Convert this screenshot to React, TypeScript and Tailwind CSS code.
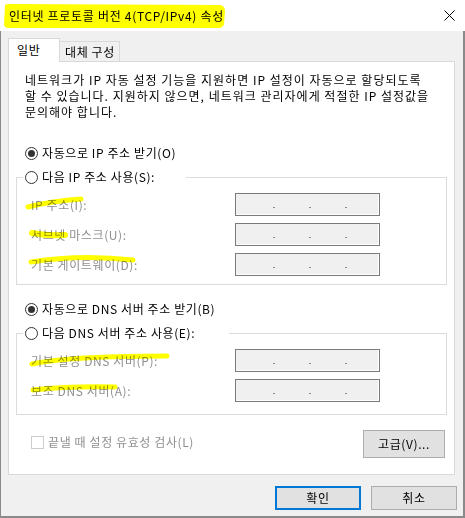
import React from "react";

function Radio({ checked, label }: { checked?: boolean; label: string }) {
  return (
    <div className="flex items-center h-[16px] leading-[16px] whitespace-nowrap">
      <span className="w-[13px] h-[13px] rounded-full border border-[#333333] bg-white flex items-center justify-center shrink-0">
        {checked && <span className="w-[7px] h-[7px] rounded-full bg-[#333333]" />}
      </span>
      <span className="ml-[4px] tracking-[0.6px]">{label}</span>
    </div>
  );
}

function IpField() {
  return (
    <div className="w-[145px] h-[23px] border border-[#7a7a7a] bg-[#f0f0f0] shadow-[inset_-1px_-1px_0_#ffffff] flex pl-[37px] gap-[34px] pt-[13px] shrink-0">
      <span className="w-[2px] h-[1px] bg-[#8a8a9a]" />
      <span className="w-[2px] h-[1px] bg-[#8a8a9a]" />
      <span className="w-[2px] h-[1px] bg-[#8a8a9a]" />
    </div>
  );
}

function FieldRow({ label }: { label: string }) {
  return (
    <div className="flex items-center justify-between pr-[66px]">
      <span className="text-[#8f8f8f] whitespace-nowrap leading-[16px] tracking-[0.6px]">{label}</span>
      <IpField />
    </div>
  );
}

function Group({ legend, legendWidth, children, pb }: { legend: string; legendWidth: string; children: React.ReactNode; pb: string }) {
  return (
    <fieldset className={`border border-[#dcdcdc] ml-[7px] w-[431px] ${pb}`}>
      <legend className={`ml-[6px] pl-[2px] ${legendWidth}`}>
        <Radio label={legend} />
      </legend>
      <div className="flex flex-col gap-[7px] pt-[8px] pl-[14px]">{children}</div>
    </fieldset>
  );
}

function Button({ label, primary, h = "h-[24px]", w = "w-[86px]" }: { label: string; primary?: boolean; h?: string; w?: string }) {
  return (
    <div
      className={`${w} ${h} bg-[#e1e1e1] flex items-center justify-center leading-[16px] tracking-[0.6px] ${
        primary ? "border-2 border-[#0078d7]" : "border border-[#adadad]"
      }`}
    >
      {label}
    </div>
  );
}

export default function App() {
  return (
    <div className="relative w-[465px] h-[518px] flex flex-col bg-[#f0f0f0] text-[12px] text-black font-['Noto_Sans_CJK_KR','Noto_Sans',sans-serif] overflow-hidden">
      {/* title bar */}
      <div className="h-[31px] bg-white flex items-center justify-between pl-[9px] pr-[10px] shrink-0">
        <span className="leading-[16px] whitespace-nowrap tracking-[0.7px]">인터넷 프로토콜 버전 4(TCP/IPv4) 속성</span>
        <svg width="11" height="11" viewBox="0 0 11 11">
          <path d="M0.5 0.5 L10.5 10.5 M10.5 0.5 L0.5 10.5" stroke="#000" strokeWidth="1" />
        </svg>
      </div>

      <div className="flex-1 flex flex-col border-l border-r-2 border-b-2 border-[#8a8a8a] pl-[7px] pt-[7px]">
        {/* tabs */}
        <div className="flex items-end h-[23px]">
          <div className="w-[52px] h-[24px] -mb-px relative z-10 bg-white border border-b-0 border-[#d9d9d9] pl-[8px] pt-[3px] leading-[16px] tracking-[0.6px]">
            일반
          </div>
          <div className="w-[60px] h-[20px] border-t border-r border-[#d9d9d9] pl-[5px] pt-[2px] leading-[16px] whitespace-nowrap tracking-[0.6px]">
            대체 구성
          </div>
        </div>

        {/* panel */}
        <div className="w-[447px] h-[414px] bg-white border border-[#d9d9d9] flex flex-col">
          <p className="pl-[16px] pt-[10px] leading-[16px] whitespace-nowrap tracking-[1px]">
            네트워크가 IP 자동 설정 기능을 지원하면 IP 설정이 자동으로 할당되도록
            <br />
            할 수 있습니다. 지원하지 않으면, 네트워크 관리자에게 적절한 IP 설정값을
            <br />
            문의해야 합니다.
          </p>

          <div className="pl-[16px] mt-[25px]">
            <Radio checked label="자동으로 IP 주소 받기(O)" />
          </div>

          <div className="mt-[8px]">
            <Group legend="다음 IP 주소 사용(S):" legendWidth="w-[163px]" pb="pb-[8px]">
              <FieldRow label="IP 주소(I):" />
              <FieldRow label="서브넷 마스크(U):" />
              <FieldRow label="기본 게이트웨이(D):" />
            </Group>
          </div>

          <div className="pl-[16px] mt-[16px]">
            <Radio checked label="자동으로 DNS 서버 주소 받기(B)" />
          </div>

          <div className="mt-[8px]">
            <Group legend="다음 DNS 서버 주소 사용(E):" legendWidth="w-[206px]" pb="pb-[12px]">
              <FieldRow label="기본 설정 DNS 서버(P):" />
              <FieldRow label="보조 DNS 서버(A):" />
            </Group>
          </div>

          <div className="flex items-start justify-between mt-[15px] pl-[22px] pr-[9px]">
            <div className="flex items-center mt-[4px] leading-[16px]">
              <span className="w-[13px] h-[13px] border border-[#cccccc] bg-white" />
              <span className="ml-[4px] text-[#8f8f8f] whitespace-nowrap tracking-[0.6px]">끝낼 때 설정 유효성 검사(L)</span>
            </div>
            <Button label="고급(V)..." w="w-[82px]" h="h-[28px]" />
          </div>
        </div>

        {/* bottom buttons */}
        <div className="flex justify-end gap-[10px] pr-[6px] mt-[11px]">
          <Button label="확인" primary />
          <Button label="취소" />
        </div>
      </div>

      {/* highlighter marks */}
      <svg className="absolute inset-0 pointer-events-none mix-blend-multiply" width="465" height="518" viewBox="0 0 465 518">
        <path d="M5 7 Q4 4 9 4 L220 5 Q225 6 225 11 L224 24 Q223 28 218 28 L9 28 Q4 28 4 24 Z" fill="#ffff00" />
        <g stroke="#ffff00" strokeLinecap="round" fill="none">
          <path d="M28 207 Q52 201 81 199" strokeWidth="5" />
          <path d="M32 233 Q48 236 65 235" strokeWidth="6" />
          <path d="M31 262 Q80 254 133 260" strokeWidth="5" />
          <path d="M32 364 Q70 356 167 356" strokeWidth="5" />
          <path d="M33 390 Q70 386 115 387" strokeWidth="5" />
        </g>
      </svg>
    </div>
  );
}
